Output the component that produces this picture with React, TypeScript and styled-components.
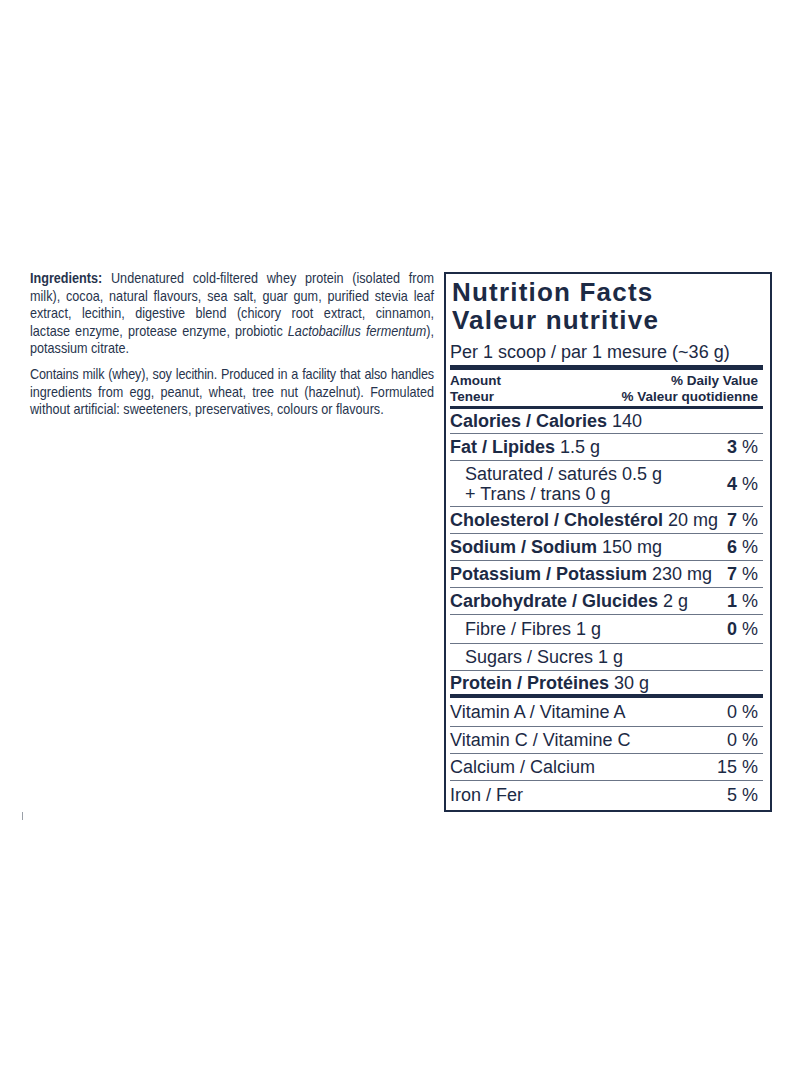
import React from "react";
import styled, { createGlobalStyle } from "styled-components";

const Global = createGlobalStyle`
  html, body { margin: 0; padding: 0; background: #ffffff; }
  body { font-family: "Liberation Sans", Arial, sans-serif; }
`;

const NAVY = "#1c2a45";

const Page = styled.div`
  width: 800px;
  min-height: 1091px;
  box-sizing: border-box;
  padding-top: 269px;
  background: #fff;
`;

const Row = styled.div`
  display: flex;
  align-items: flex-start;
  gap: 10px;
  padding-left: 30px;
`;

const Ingredients = styled.div`
  width: 404px;
  flex: none;
`;

const Condensed = styled.div`
  width: 480px;
  transform: scaleX(0.8417);
  transform-origin: left top;
  font-family: "Liberation Sans", Arial, sans-serif;
  font-size: 15px;
  line-height: 17.5px;
  color: #27344d;
`;

const Para = styled.p`
  margin: 0 0 8.5px 0;
`;

const Line = styled.span<{ $last?: boolean; $tight?: boolean }>`
  display: block;
  white-space: nowrap;
  letter-spacing: ${(p) => (p.$tight ? "-0.2px" : "0")};
  text-align: ${(p) => (p.$last ? "left" : "justify")};
  text-align-last: ${(p) => (p.$last ? "left" : "justify")};
`;

const Label = styled.div`
  margin-top: 3px;
  width: 328px;
  flex: none;
  box-sizing: border-box;
  border: 2px solid ${NAVY};
  padding: 4px 7px 2px 4px;
  color: ${NAVY};
  font-family: "Liberation Sans", Arial, sans-serif;
`;

const Title = styled.h1`
  margin: 0 0 7px 0;
  font-size: 26px;
  line-height: 28px;
  font-weight: 700;
  letter-spacing: 1.2px;
  padding-left: 2px;
`;

const Serving = styled.div`
  font-size: 18px;
  line-height: 22px;
  padding-bottom: 2px;
  border-bottom: 5px solid ${NAVY};
`;

const Header = styled.div`
  display: flex;
  justify-content: space-between;
  font-size: 13.5px;
  font-weight: 700;
  line-height: 15.5px;
  padding: 3px 5px 2px 0;
  border-bottom: 3px solid ${NAVY};
`;

const HeaderCol = styled.div<{ $right?: boolean }>`
  display: flex;
  flex-direction: column;
  text-align: ${(p) => (p.$right ? "right" : "left")};
`;

const NRow = styled.div<{ $indent?: boolean; $h?: number; $thick?: boolean; $none?: boolean }>`
  display: flex;
  justify-content: space-between;
  align-items: center;
  box-sizing: border-box;
  height: ${(p) => p.$h ?? 27}px;
  padding: 0 5px 0 ${(p) => (p.$indent ? 15 : 0)}px;
  font-size: 18px;
  line-height: 20px;
  border-bottom: ${(p) => (p.$none ? "none" : p.$thick ? `4px solid ${NAVY}` : "1px solid #6b7587")};
`;

const Name = styled.div`
  display: flex;
  flex-direction: column;
`;

const B = styled.b`
  font-weight: 700;
`;

const Pct = styled.div`
  white-space: nowrap;
`;

const Tick = styled.div`
  margin: 0 0 0 22px;
  width: 1px;
  height: 8px;
  background: #9aa0a8;
`;

type Item = {
  bold: string;
  rest: string;
  pct: string;
};

const mid: Item[] = [
  { bold: "Cholesterol / Cholestérol", rest: " 20 mg", pct: "7" },
  { bold: "Sodium / Sodium", rest: " 150 mg", pct: "6" },
  { bold: "Potassium / Potassium", rest: " 230 mg", pct: "7" },
  { bold: "Carbohydrate / Glucides", rest: " 2 g", pct: "1" },
];

const vitamins = [
  ["Vitamin A / Vitamine A", "0"],
  ["Vitamin C / Vitamine C", "0"],
  ["Calcium / Calcium", "15"],
  ["Iron / Fer", "5"],
];

function PctCell({ v, bold }: { v?: string; bold?: boolean }) {
  if (!v) return null;
  return <Pct>{bold ? <B>{v}</B> : v} %</Pct>;
}

export default function App() {
  return (
    <Page>
      <Global />
      <Row>
        <Ingredients>
          <Condensed>
            <Para>
              <Line>
                <B>Ingredients:</B> Undenatured cold-filtered whey protein (isolated from
              </Line>
              <Line>milk), cocoa, natural flavours, sea salt, guar gum, purified stevia leaf</Line>
              <Line>extract, lecithin, digestive blend (chicory root extract, cinnamon,</Line>
              <Line>
                lactase enzyme, protease enzyme, probiotic <i>Lactobacillus fermentum</i>),
              </Line>
              <Line $last>potassium citrate.</Line>
            </Para>
            <Para>
              <Line $tight>Contains milk (whey), soy lecithin. Produced in a facility that also handles</Line>
              <Line>ingredients from egg, peanut, wheat, tree nut (hazelnut). Formulated</Line>
              <Line $last>without artificial: sweeteners, preservatives, colours or flavours.</Line>
            </Para>
          </Condensed>
        </Ingredients>
        <Label>
          <Title>
            Nutrition Facts
            <br />
            Valeur nutritive
          </Title>
          <Serving>Per 1 scoop / par 1 mesure (~36 g)</Serving>
          <Header>
            <HeaderCol>
              <span>Amount</span>
              <span>Teneur</span>
            </HeaderCol>
            <HeaderCol $right>
              <span>% Daily Value</span>
              <span>% Valeur quotidienne</span>
            </HeaderCol>
          </Header>
          <NRow $h={25}>
            <span>
              <B>Calories / Calories</B> 140
            </span>
          </NRow>
          <NRow>
            <span>
              <B>Fat / Lipides</B> 1.5 g
            </span>
            <PctCell v="3" bold />
          </NRow>
          <NRow $indent $h={46}>
            <Name>
              <span>Saturated / saturés 0.5 g</span>
              <span>+ Trans / trans 0 g</span>
            </Name>
            <PctCell v="4" bold />
          </NRow>
          {mid.map((it) => (
            <NRow key={it.bold}>
              <span>
                <B>{it.bold}</B>
                {it.rest}
              </span>
              <PctCell v={it.pct} bold />
            </NRow>
          ))}
          <NRow $indent $h={29}>
            <span>Fibre / Fibres 1 g</span>
            <PctCell v="0" bold />
          </NRow>
          <NRow $indent>
            <span>Sugars / Sucres 1 g</span>
          </NRow>
          <NRow $thick $h={27}>
            <span>
              <B>Protein / Protéines</B> 30 g
            </span>
          </NRow>
          {vitamins.map(([n, v], i) => (
            <NRow key={n} $none={i === vitamins.length - 1} $h={i === 0 ? 29 : 27}>
              <span>{n}</span>
              <PctCell v={v} />
            </NRow>
          ))}
        </Label>
      </Row>
      <Tick />
    </Page>
  );
}
